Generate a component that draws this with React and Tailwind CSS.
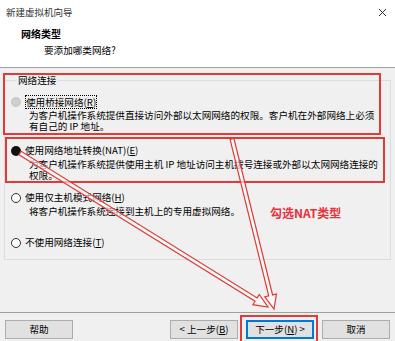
import React from 'react'

const FONT = { fontFamily: '"Noto Sans CJK SC", "Microsoft YaHei", sans-serif' }

// hollow arrow outline from start to tip
function arrowPoints([sx, sy], [tx, ty], w = 2, h = 6, len = 14) {
  const dx = tx - sx
  const dy = ty - sy
  const d = Math.hypot(dx, dy)
  const ux = dx / d
  const uy = dy / d
  const nx = -uy
  const ny = ux
  const bx = tx - ux * len
  const by = ty - uy * len
  const pts = [
    [sx + nx * w, sy + ny * w],
    [bx + nx * w, by + ny * w],
    [bx + nx * h, by + ny * h],
    [tx, ty],
    [bx - nx * h, by - ny * h],
    [bx - nx * w, by - ny * w],
    [sx - nx * w, sy - ny * w],
  ]
  return pts.map((p) => p.join(',')).join(' ')
}

function Radio({ state }) {
  if (state === 'disabled')
    return <span className="w-[10px] h-[10px] rounded-full bg-[#cfcfcf] border border-[#c4c4c4] shrink-0" />
  if (state === 'checked')
    return <span className="w-[10px] h-[10px] rounded-full bg-[#111] shrink-0" />
  return <span className="w-[10px] h-[10px] rounded-full bg-white border border-[#333] shrink-0" />
}

function Option({ state, children, desc, className = '' }) {
  return (
    <div className={className}>
      <div className="flex items-center gap-[4px] h-[13px]">
        <Radio state={state} />
        {children}
      </div>
      {desc && <div className="pl-[18px] mt-[2px] text-[9.6px] leading-[11px] text-black">{desc}</div>}
    </div>
  )
}

function Btn({ children, primary }) {
  return (
    <button
      className={
        'h-[19px] w-[68px] flex items-center justify-center text-[9.6px] text-black bg-[#e1e1e1] ' +
        (primary ? 'border-2 border-[#0078d7]' : 'border border-[#adadad]')
      }
    >
      {children}
    </button>
  )
}

export default function App() {
  return (
    <div className="relative w-[395px] h-[341px] overflow-hidden bg-[#f0f0f0] text-black" style={FONT}>
      {/* header */}
      <div className="h-[68px] bg-white border-b border-[#a0a0a0]">
        <div className="flex justify-between items-center pt-[6px] pl-[6px] pr-[8px] h-[19px]">
          <span className="text-[9.5px] leading-[13px] text-[#333]">新建虚拟机向导</span>
          <svg width="9" height="9" viewBox="0 0 9 9">
            <path d="M1 1 L8 8 M8 1 L1 8" stroke="#333" strokeWidth="1" />
          </svg>
        </div>
        <div className="pl-[21px] mt-[8px] text-[10px] leading-[13px] font-bold">网络类型</div>
        <div className="pl-[44px] mt-[4px] text-[9.6px] leading-[13px]">要添加哪类网络?</div>
      </div>

      {/* body */}
      <div className="h-[244px] pt-[6px] px-[4px]">
        <fieldset className="border border-[#dcdcdc] pl-[6px] pr-[4px] pt-[8px] pb-[10px]">
          <legend className="ml-[5px] px-[2px] text-[9.6px] leading-[13px]">网络连接</legend>
          <Option
            state="disabled"
            desc={<>为客户机操作系统提供直接访问外部以太网网络的权限。客户机在外部网络上必须<br />有自己的 IP 地址。</>}
          >
            <span className="text-[9.6px] leading-[12px] border border-dotted border-black">
              使用桥接网络(<u>R</u>)
            </span>
          </Option>
          <Option
            state="checked"
            className="mt-[12px]"
            desc={<>为客户机操作系统提供使用主机 IP 地址访问主机拨号连接或外部以太网网络连接的<br />权限。</>}
          >
            <span className="text-[9.6px] leading-[13px]">使用网络地址转换(NAT)(<u>E</u>)</span>
          </Option>
          <Option state="off" className="mt-[10px]" desc="将客户机操作系统连接到主机上的专用虚拟网络。">
            <span className="text-[9.6px] leading-[13px]">使用仅主机模式网络(<u>H</u>)</span>
          </Option>
          <Option state="off" className="mt-[19px]">
            <span className="text-[9.6px] leading-[13px]">不使用网络连接(<u>T</u>)</span>
          </Option>
        </fieldset>
      </div>

      {/* footer */}
      <div className="border-t border-[#a0a0a0] pt-[7px] px-[5px] flex items-center">
        <Btn>帮助</Btn>
        <div className="flex-1" />
        <div className="flex gap-[8px]">
          <Btn>&lt; 上一步(<u>B</u>)</Btn>
          <Btn primary>下一步(<u>N</u>) &gt;</Btn>
          <Btn>取消</Btn>
        </div>
      </div>

      {/* annotations */}
      <div className="absolute left-[3px] top-[73px] w-[378px] h-[62px] border-2 border-[#e53935]" />
      <div className="absolute left-[5px] top-[137px] w-[380px] h-[46px] border-2 border-[#e53935]" />
      <div className="absolute left-[240px] top-[315px] w-[78px] h-[30px] border-2 border-[#e53935]" />
      <div className="absolute left-[270px] top-[205px] text-[12px] leading-[16px] font-bold text-[#e8323c]">
        勾选NAT类型
      </div>
      <svg className="absolute inset-0 pointer-events-none" width="395" height="341">
        <polygon
          points={arrowPoints([20, 153], [268, 307])}
          fill="rgba(255,255,255,0.6)"
          stroke="#e53935"
          strokeWidth="1.2"
          strokeLinejoin="miter"
        />
        <polygon
          points={arrowPoints([232, 139], [274, 309])}
          fill="rgba(255,255,255,0.6)"
          stroke="#e53935"
          strokeWidth="1.2"
          strokeLinejoin="miter"
        />
      </svg>
    </div>
  )
}
